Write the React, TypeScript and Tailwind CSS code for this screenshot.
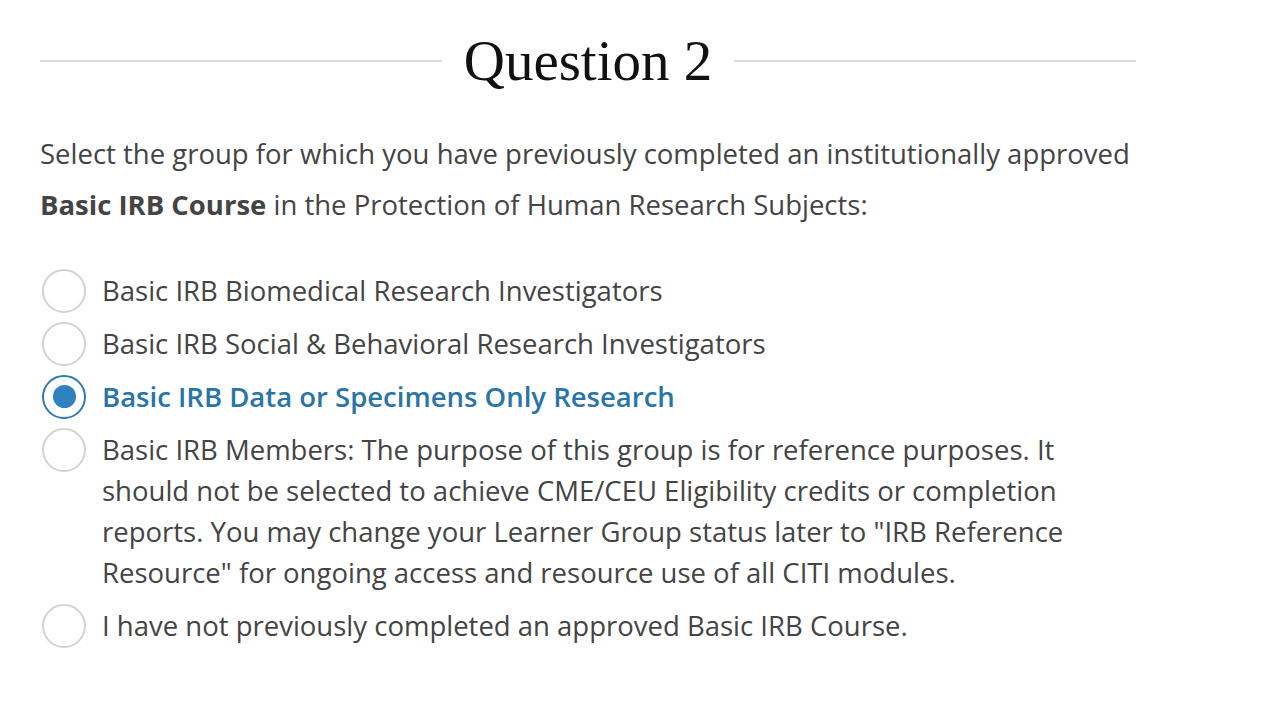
import { useState } from "react";

const options = [
  "Basic IRB Biomedical Research Investigators",
  "Basic IRB Social & Behavioral Research Investigators",
  "Basic IRB Data or Specimens Only Research",
  'Basic IRB Members: The purpose of this group is for reference purposes. It should not be selected to achieve CME/CEU Eligibility credits or completion reports. You may change your Learner Group status later to "IRB Reference Resource" for ongoing access and resource use of all CITI modules.',
  "I have not previously completed an approved Basic IRB Course.",
];

export default function App() {
  const [selected, setSelected] = useState(2);

  return (
    <div className="min-h-screen bg-white pl-10 pt-[25px]" style={{ fontFamily: '"Open Sans", sans-serif' }}>
      <div className="w-[1096px]">
        {/* Heading with rules */}
        <div className="flex items-center gap-[22px]">
          <div className="h-[2px] flex-1 bg-[#dadada]" />
          <h2
            className="text-[57px] leading-[72px] text-[#111]"
            style={{ fontFamily: '"Liberation Serif", serif' }}
          >
            Question 2
          </h2>
          <div className="h-[2px] flex-1 bg-[#dadada]" />
        </div>

        <p className="mt-[31px] w-[1100px] text-[27.5px] leading-[51px] text-[#444]">
          Select the group for which you have previously completed an institutionally approved{" "}
          <span className="font-bold">Basic IRB Course</span> in the Protection of Human Research Subjects:
        </p>

        <div className="mt-[40px] flex flex-col gap-[12px]">
          {options.map((label, i) => {
            const active = i === selected;
            return (
              <label
                key={i}
                className="flex cursor-pointer items-start gap-[16px]"
                onClick={() => setSelected(i)}
              >
                <span
                  className={`my-[-1.5px] ml-[2px] flex h-[44px] w-[44px] shrink-0 items-center justify-center rounded-full border-2 ${
                    active ? "border-[#2d7cb4]" : "border-[#d2d2d2]"
                  }`}
                >
                  {active && <span className="h-[23px] w-[23px] rounded-full bg-[#2f80bf]" />}
                </span>
                <span
                  className={`w-[995px] text-[27.5px] leading-[41px] ${
                    active ? "font-semibold text-[#2a75a8]" : "text-[#444]"
                  }`}
                >
                  {label}
                </span>
              </label>
            );
          })}
        </div>
      </div>
    </div>
  );
}
